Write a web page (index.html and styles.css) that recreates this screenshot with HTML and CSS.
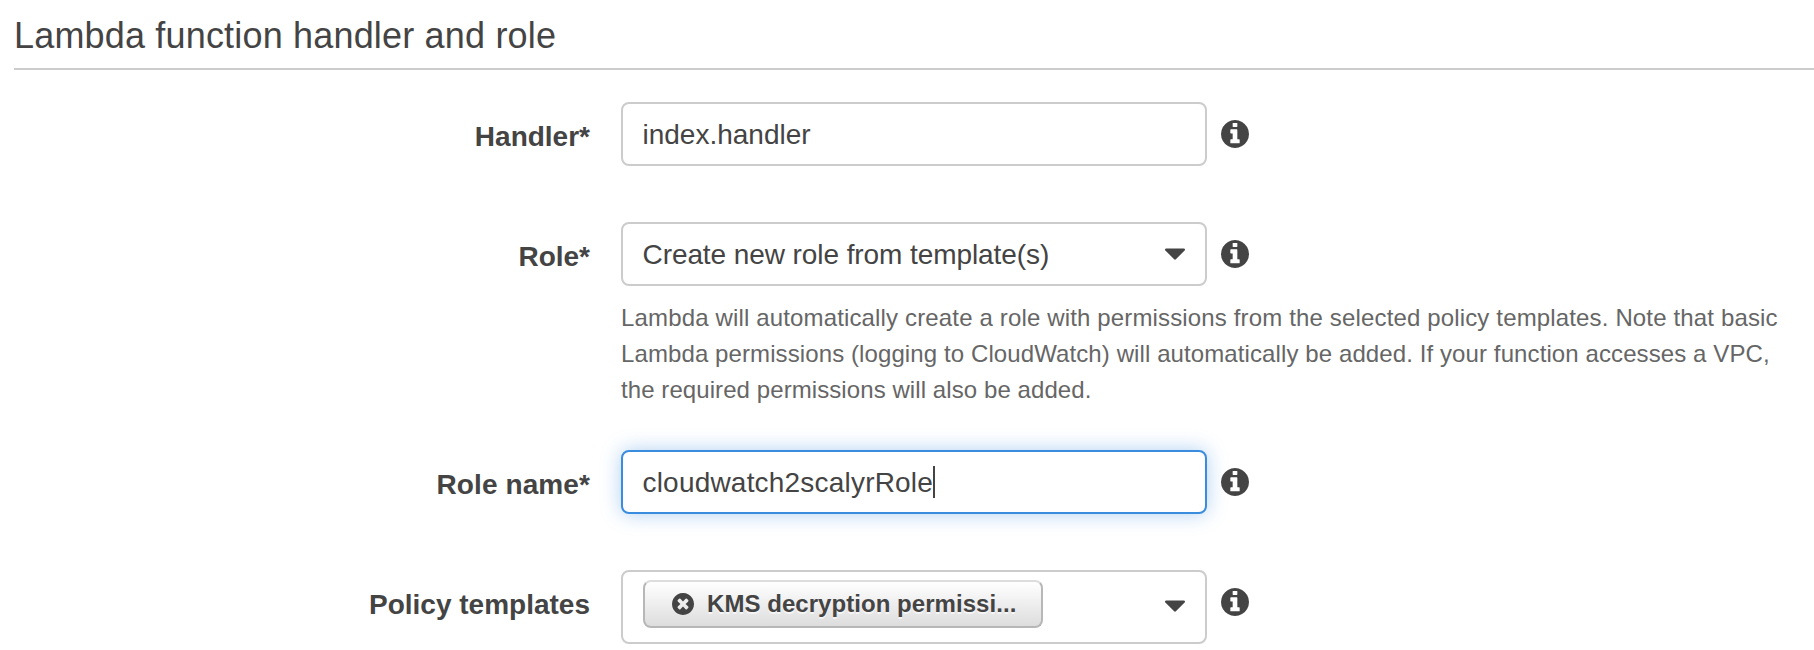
FILE: index.html
```html
<!DOCTYPE html>
<html lang="en">
<head>
<meta charset="utf-8">
<title>Lambda function handler and role</title>
<link rel="stylesheet" href="styles.css">
</head>
<body>
<svg class="sprite" aria-hidden="true">
  <symbol id="info" viewBox="128 128 1536 1536"><path d="M1152 1376v-160q0-14-9-23t-23-9h-96v-512q0-14-9-23t-23-9h-320q-14 0-23 9t-9 23v160q0 14 9 23t23 9h96v320h-96q-14 0-23 9t-9 23v160q0 14 9 23t23 9h448q14 0 23-9t9-23zM1024 480v-160q0-14-9-23t-23-9h-192q-14 0-23 9t-9 23v160q0 14 9 23t23 9h192q14 0 23-9t9-23zM1664 896q0 209-103 385.500t-279.500 279.500-385.500 103-385.500-103-279.500-279.500-103-385.500 103-385.500 279.500-279.500 385.500-103 385.500 103 279.500 279.500 103 385.500z" fill-rule="evenodd"/></symbol>
  <symbol id="remove" viewBox="128 128 1536 1536"><path d="M1277 1122q0-26-19-45l-181-181 181-181q19-19 19-45 0-27-19-46l-90-90q-19-19-46-19-26 0-45 19l-181 181-181-181q-19-19-45-19-27 0-46 19l-90 90q-19 19-19 46 0 26 19 45l181 181-181 181q-19 19-19 45 0 27 19 46l90 90q19 19 46 19 26 0 45-19l181-181 181 181q19 19 45 19 27 0 46-19l90-90q19-19 19-46zM1664 896q0 209-103 385.500t-279.500 279.500-385.500 103-385.500-103-279.500-279.500-103-385.500 103-385.500 279.500-279.500 385.500-103 385.500 103 279.500 279.500 103 385.500z" fill-rule="evenodd"/></symbol>
  <symbol id="caret" viewBox="384 640 1024 576"><path d="M1408 704q0 26-19 45l-448 448q-19 19-45 19t-45-19l-448-448q-19-19-19-45t19-45 45-19h896q26 0 45 19t19 45z"/></symbol>
</svg>
<main class="section">
  <h2 class="title">Lambda function handler and role</h2>
  <div class="form">
    <div class="row">
      <label class="label">Handler*</label>
      <div class="field"><span class="value">index.handler</span></div>
      <svg class="info"><use href="#info"/></svg>
    </div>
    <div class="row">
      <label class="label">Role*</label>
      <div class="field"><span class="value value-role">Create new role from template(s)</span><svg class="caret"><use href="#caret"/></svg></div>
      <svg class="info"><use href="#info"/></svg>
      <p class="help"><span class="line line-1">Lambda will automatically create a role with permissions from the selected policy templates. Note that basic</span><span class="line line-2">Lambda permissions (logging to CloudWatch) will automatically be added. If your function accesses a VPC,</span><span class="line line-3">the required permissions will also be added.</span></p>
    </div>
    <div class="row row-name">
      <label class="label label-name">Role name*</label>
      <div class="field focused"><span class="value value-name">cloudwatch2scalyrRole</span><span class="cursor"></span></div>
      <svg class="info"><use href="#info"/></svg>
    </div>
    <div class="row">
      <label class="label">Policy templates</label>
      <div class="field multi">
        <div class="chip"><svg class="remove"><use href="#remove"/></svg><span class="chip-text">KMS decryption permissi...</span></div>
        <svg class="caret"><use href="#caret"/></svg>
      </div>
      <svg class="info"><use href="#info"/></svg>
    </div>
  </div>
</main>
</body>
</html>
```
FILE: styles.css
```css
* { box-sizing: border-box; }
body {
  margin: 0;
  height: 650px;
  overflow: hidden;
  background: #fff;
  color: #444;
  font-family: "Liberation Sans", Arial, sans-serif;
  font-size: 28px;
}
.sprite { display: none; }
svg { fill: #444; flex: none; }
.section { padding: 16px 0 0 14px; }
.title {
  margin: 0;
  padding-bottom: 12px;
  border-bottom: 2px solid #ccc;
  font-size: 36px;
  line-height: 40px;
  font-weight: 400;
  letter-spacing: 0.18px;
}
.form { display: flex; flex-direction: column; gap: 56px; padding-top: 32px; }
.row {
  display: grid;
  grid-template-columns: 576px 31px 586px 14px 28px;
  align-items: start;
}
.label {
  grid-column: 1;
  height: 64px;
  line-height: 70px;
  font-weight: 700;
  text-align: right;
  white-space: nowrap;
}
.label-name { letter-spacing: 0.1px; }
.field {
  grid-column: 3;
  height: 64px;
  padding: 0 20px 0 19.5px;
  display: flex;
  align-items: center;
  border: 2px solid #ccc;
  border-radius: 8px;
  background: #fff;
  white-space: nowrap;
}
.value { padding-top: 2px; }
.value-role { letter-spacing: -0.08px; }
.value-name { letter-spacing: 0.2px; }
.info { grid-column: 5; width: 28px; height: 28px; margin-top: 18px; }
.caret { width: 20px; height: 12px; margin-left: auto; }
.focused { border-color: #3a8dde; box-shadow: 0 0 20px rgba(58, 141, 222, .4); }
.cursor { width: 2px; height: 32px; background: #444; }
.row-name { margin-top: -14px; }
.help {
  grid-column: 3 / -1;
  margin: 14px 0 0;
  color: #666;
  font-size: 24px;
  line-height: 36px;
  white-space: nowrap;
}
.line { display: block; }
.line-1 { letter-spacing: 0.15px; }
.line-2 { letter-spacing: 0.1px; }
.line-3 { letter-spacing: 0.08px; }
.multi { height: 74px; align-items: flex-start; padding-top: 8px; padding-left: 20px; }
.multi .caret { margin-top: 20px; }
.chip {
  width: 400px;
  height: 48px;
  padding-left: 27px;
  display: flex;
  align-items: center;
  gap: 13px;
  border: 2px solid #b7b7b7;
  border-top-color: #ddd;
  border-radius: 8px;
  background: linear-gradient(#fff, #ddd);
  font-size: 24px;
  font-weight: 700;
  line-height: 42px;
  text-shadow: 0 2px 0 rgba(255, 255, 255, .6);
}
.chip-text { letter-spacing: 0.05px; }
.remove { width: 22px; height: 22px; }
```
